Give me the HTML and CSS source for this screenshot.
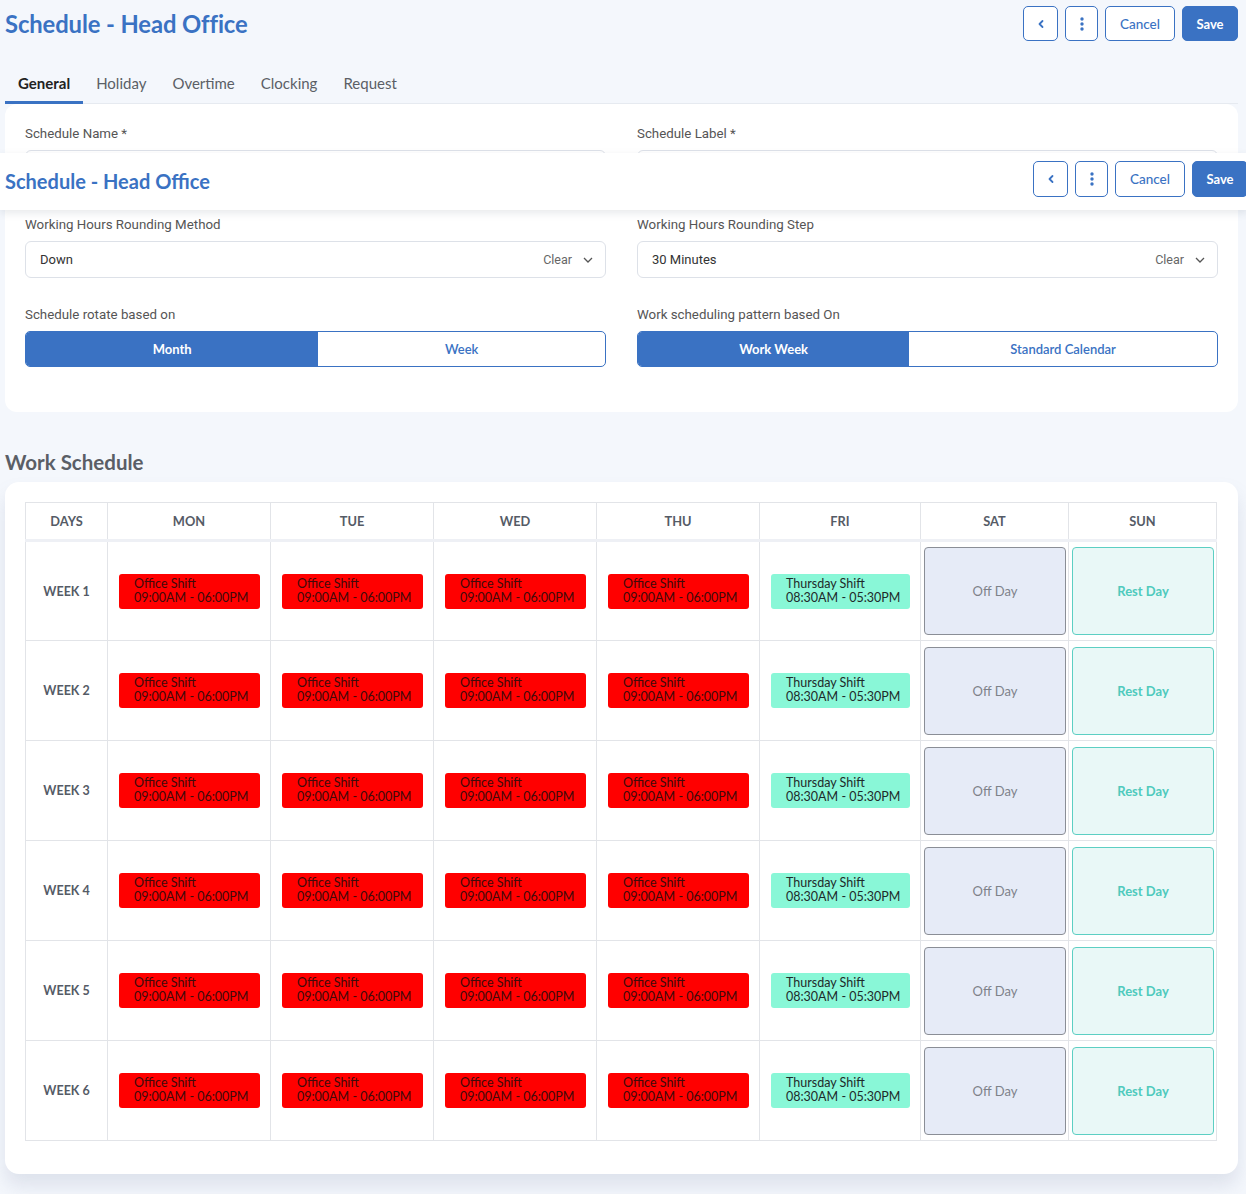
FILE: index.html
```html
<!DOCTYPE html>
<html lang="en">
<head>
<meta charset="utf-8">
<title>Schedule - Head Office</title>
<link rel="stylesheet" href="styles.css">
</head>
<body>
<div class="page">
  <header class="topbar">
    <h1 class="title">Schedule - Head Office</h1>
    <div class="actions">
      <button class="btn icon-btn" aria-label="Back"><svg width="10" height="10" viewBox="0 0 10 10"><polyline points="6.5,2 3.5,5 6.5,8" fill="none" stroke="#3a72c3" stroke-width="1.8" stroke-linecap="round" stroke-linejoin="round"/></svg></button>
      <button class="btn icon-btn kebab" aria-label="More"><svg width="6" height="16" viewBox="0 0 6 16"><circle cx="3" cy="3" r="1.7" fill="#3a72c3"/><circle cx="3" cy="8" r="1.7" fill="#3a72c3"/><circle cx="3" cy="13" r="1.7" fill="#3a72c3"/></svg></button>
      <button class="btn outline">Cancel</button>
      <button class="btn primary">Save</button>
    </div>
  </header>

  <nav class="tabs">
    <a class="tab active">General</a>
    <a class="tab">Holiday</a>
    <a class="tab">Overtime</a>
    <a class="tab">Clocking</a>
    <a class="tab">Request</a>
  </nav>

  <section class="card form-card">
    <div class="form-grid">
      <div class="field">
        <label class="label">Schedule Name *</label>
        <div class="input"></div>
      </div>
      <div class="field">
        <label class="label">Schedule Label *</label>
        <div class="input"></div>
      </div>
      <div class="field">
        <label class="label">Working Hours Rounding Method</label>
        <div class="input select"><span class="value">Down</span><span class="clear">Clear</span><svg class="chev" width="10" height="6" viewBox="0 0 10 6"><polyline points="1,1 5,5 9,1" fill="none" stroke="#555" stroke-width="1.3"/></svg></div>
      </div>
      <div class="field">
        <label class="label">Working Hours Rounding Step</label>
        <div class="input select"><span class="value">30 Minutes</span><span class="clear">Clear</span><svg class="chev" width="10" height="6" viewBox="0 0 10 6"><polyline points="1,1 5,5 9,1" fill="none" stroke="#555" stroke-width="1.3"/></svg></div>
      </div>
      <div class="field">
        <label class="label">Schedule rotate based on</label>
        <div class="toggle"><span class="opt on">Month</span><span class="opt">Week</span></div>
      </div>
      <div class="field">
        <label class="label">Work scheduling pattern based On</label>
        <div class="toggle"><span class="opt on">Work Week</span><span class="opt">Standard Calendar</span></div>
      </div>
    </div>
  </section>

  <h2 class="section-title">Work Schedule</h2>

  <section class="card sched-card">
    <table class="sched">
      <thead>
        <tr>
          <th class="c-days">DAYS</th>
          <th class="c-day">MON</th>
          <th class="c-day">TUE</th>
          <th class="c-day">WED</th>
          <th class="c-day">THU</th>
          <th class="c-fri">FRI</th>
          <th class="c-we">SAT</th>
          <th class="c-we">SUN</th>
        </tr>
      </thead>
      <tbody id="rows">
      </tbody>
    </table>
  </section>
</div>

<div class="sticky">
  <h1 class="sticky-title">Schedule - Head Office</h1>
  <div class="actions">
    <button class="btn icon-btn" aria-label="Back"><svg width="10" height="10" viewBox="0 0 10 10"><polyline points="6.5,2 3.5,5 6.5,8" fill="none" stroke="#3a72c3" stroke-width="1.8" stroke-linecap="round" stroke-linejoin="round"/></svg></button>
    <button class="btn icon-btn kebab" aria-label="More"><svg width="6" height="16" viewBox="0 0 6 16"><circle cx="3" cy="3" r="1.7" fill="#3a72c3"/><circle cx="3" cy="8" r="1.7" fill="#3a72c3"/><circle cx="3" cy="13" r="1.7" fill="#3a72c3"/></svg></button>
    <button class="btn outline">Cancel</button>
    <button class="btn primary">Save</button>
  </div>
</div>

<script src="app.js"></script>
</body>
</html>
```

FILE: app.js
```js
(function () {
  var tbody = document.getElementById('rows');
  var html = '';
  for (var w = 1; w <= 6; w++) {
    html += '<tr>';
    html += '<td class="week">WEEK ' + w + '</td>';
    for (var d = 0; d < 4; d++) {
      html += '<td><div class="chip red"><span>Office Shift</span><span>09:00AM - 06:00PM</span></div></td>';
    }
    html += '<td><div class="chip teal"><span>Thursday Shift</span><span>08:30AM - 05:30PM</span></div></td>';
    html += '<td class="box-cell"><div class="box off">Off Day</div></td>';
    html += '<td class="box-cell"><div class="box rest">Rest Day</div></td>';
    html += '</tr>';
  }
  tbody.innerHTML = html;
})();
```

FILE: styles.css
```css
* { box-sizing: border-box; }
html, body { margin: 0; padding: 0; overflow: hidden; }
body {
  background: #f4f7fc;
  font-family: Roboto, "Liberation Sans", Arial, sans-serif;
  color: #444;
  width: 1246px;
  height: 1194px;
  position: relative;
}
.page { padding: 0 8px 0 5px; }

.topbar {
  display: flex;
  justify-content: space-between;
  align-items: flex-start;
  padding-top: 6px;
  height: 41px;
}
.title {
  margin: 0;
  font-family: Lato, "Open Sans", sans-serif;
  font-weight: 700;
  font-size: 23.8px;
  line-height: 38px;
  margin-top: -1px;
  color: #3a72c3;
  letter-spacing: -0.1px;
}
.actions { display: flex; gap: 7px; }
.btn {
  height: 35px;
  border: 1px solid #3a72c3;
  border-radius: 5px;
  background: #fff;
  color: #3a72c3;
  font-family: Lato, "Open Sans", sans-serif;
  font-size: 13px;
  font-weight: 600;
  padding: 0;
  display: inline-flex;
  align-items: center;
  justify-content: center;
}
.icon-btn { width: 35px; }
.icon-btn.kebab { width: 33px; }
.btn.outline { width: 70px; font-weight: 500; font-size: 13.5px; }
.btn.primary { width: 56px; background: #3a72c3; color: #fff; font-weight: 700; }

.tabs {
  display: flex;
  margin-top: 24px;
  border-bottom: 1px solid #e6eaf0;
  height: 39px;
}
.tab {
  padding: 9px 13px 0;
  font-family: Lato, "Open Sans", sans-serif;
  font-size: 15px;
  line-height: 19px;
  color: #5b5f66;
  border-bottom: 3px solid transparent;
  height: 39px;
}
.tab.active { color: #222; font-weight: 700; border-bottom-color: #3a72c3; }

.card {
  background: #fff;
  border-radius: 12px;
}
.form-card { padding: 21px 20px 20px; height: 308px; }
.form-grid {
  display: grid;
  grid-template-columns: 1fr 1fr;
  column-gap: 31px;
  row-gap: 30px;
}
.field { display: flex; flex-direction: column; }
.label {
  font-size: 13.3px;
  line-height: 16px;
  color: #555;
  margin-bottom: 8px;
}
.field:nth-child(1) .label, .field:nth-child(2) .label { margin-top: 1px; }
.field:nth-child(5) .label, .field:nth-child(6) .label { margin-top: -1px; }
.input {
  height: 37px;
  border: 1px solid #dde1e8;
  border-radius: 6px;
  background: #fff;
}
.select {
  display: flex;
  align-items: center;
  padding: 0 12px 0 14px;
  font-size: 13px;
  color: #333;
}
.select .value { flex: 1; }
.select .clear { color: #666; font-size: 12.5px; margin-right: 11px; }
.select .chev { display: block; }

.toggle {
  display: flex;
  height: 36px;
  border: 1px solid #3a72c3;
  border-radius: 5px;
  overflow: hidden;
}
.toggle .opt {
  flex: 1 1 auto;
  display: flex;
  align-items: center;
  justify-content: center;
  font-family: Lato, "Open Sans", sans-serif;
  font-size: 13px;
  color: #3a72c3;
  font-weight: 600;
  padding: 0 10px;
}
.toggle .opt.on { background: #3a72c3; color: #fff; font-weight: 700; }

.section-title {
  margin: 38px 0 8px;
  font-family: Lato, "Open Sans", sans-serif;
  font-size: 20.5px;
  line-height: 24px;
  font-weight: 700;
  color: #5a5e66;
}

.sched-card {
  padding: 20px 20px 33px;
  border-radius: 14px;
  box-shadow: 0 12px 18px rgba(120, 135, 165, 0.18);
}
.sched {
  width: 1192px;
  border-collapse: collapse;
  table-layout: fixed;
  font-family: Lato, "Open Sans", sans-serif;
}
.sched th, .sched td {
  border: 1px solid #e2e4e8;
  text-align: center;
  padding: 0;
}
.sched th {
  height: 38px;
  font-size: 12.8px;
  font-weight: 700;
  color: #555b66;
  border-bottom: 3px solid #eef0f5;
}
.c-days { width: 82px; }
.c-day { width: 163px; }
.c-fri { width: 161px; }
.c-we { width: 148px; }
.sched td { height: 100px; }
.sched td.week { font-size: 12.5px; font-weight: 700; color: #555b66; }

.chip {
  margin: 0 10px 0 11px;
  height: 35px;
  border-radius: 3px;
  padding: 3px 0 0 15px;
  display: flex;
  flex-direction: column;
  align-items: flex-start;
  font-size: 12.5px;
  line-height: 14px;
  text-align: left;
}
.chip.red { background: #ff0000; color: #400a0a; }
.chip.teal { background: #89f7d7; color: #1e2a2a; }

.box-cell { padding: 0 2px !important; }
.box {
  height: 88px;
  margin-left: 1px;
  border-radius: 4px;
  display: flex;
  align-items: center;
  justify-content: center;
  font-size: 13px;
}
.box.off { background: #e6ebf7; border: 1px solid #8a8e96; color: #7e828a; }
.box.rest { background: #e9f8f7; border: 1px solid #5ccfc3; color: #4fcabd; font-weight: 700; }

.sticky {
  position: absolute;
  top: 153px;
  left: 0;
  width: 1248px;
  height: 57px;
  background: #fff;
  box-shadow: 0 3px 8px rgba(60, 70, 90, 0.12);
  display: flex;
  justify-content: space-between;
  align-items: flex-start;
  padding: 8px 0 0 5px;
}
.sticky-title {
  margin: 0;
  font-family: Lato, "Open Sans", sans-serif;
  font-weight: 700;
  font-size: 20px;
  line-height: 40px;
  color: #3a72c3;
}
.sticky .btn { height: 36px; }
```
